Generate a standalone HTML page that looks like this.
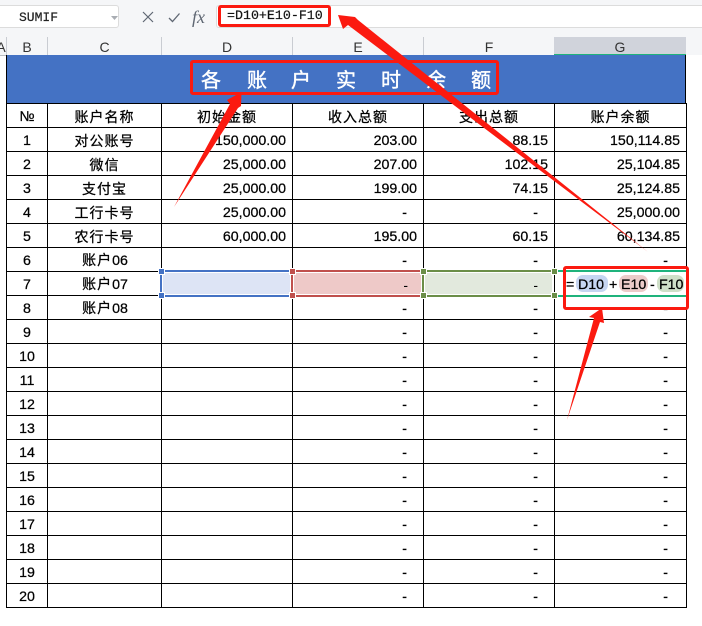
<!DOCTYPE html>
<html><head><meta charset="utf-8">
<style>
html,body{margin:0;padding:0;background:#fff}
body{width:702px;height:626px;position:relative;overflow:hidden;font-family:"Liberation Sans","Noto Sans CJK SC",sans-serif;color:#000}
.abs{position:absolute}
#tb{left:0;top:0;width:702px;height:55px;background:#f5f6f8}
#fb{left:216px;top:5px;width:486px;height:23px;background:#fff;border-top:1px solid #dcdcdc;border-bottom:1px solid #dcdcdc;box-sizing:border-box;border-left:1px solid #dcdcdc;border-radius:3px 0 0 3px}
#nb{left:-4px;top:5px;width:123px;height:23px;background:#fff;border:1px solid #dcdcdc;border-radius:3px;box-sizing:border-box}
.mono{font-family:"Liberation Mono",monospace;position:absolute;white-space:pre;-webkit-text-stroke:.2px}
.hd{position:absolute;top:37px;height:18px;line-height:20px;font-size:14px;color:#333;text-align:center}
.sep{position:absolute;top:37px;height:18px;width:1px;background:#c9ccd2}
#title{left:6px;top:55px;width:680px;height:48px;background:#4472c4;box-sizing:border-box;border-left:1px solid #000;border-right:1px solid #000}
.tc{position:absolute;top:70px;width:22px;text-align:center;color:#fff;font-size:20px;line-height:22px;font-weight:normal;-webkit-text-stroke:.4px #fff}
table{position:absolute;left:6px;top:103px;width:680px;border-collapse:collapse;table-layout:fixed;font-size:14.2px;-webkit-text-stroke:.25px #000}
td{border:1px solid #000;padding:2px 0 0;box-sizing:border-box;height:24px;line-height:20px;overflow:hidden;white-space:nowrap}
td.c{text-align:center}
td.z{text-align:center;font-size:14px;letter-spacing:1px}
td.n{text-align:center;font-size:14.2px;padding-left:1px}
td.n span{font-size:14px;letter-spacing:1px}
td.r{text-align:right;padding-right:6px}
td.d{text-align:right;padding-right:16px}
td.g{text-align:right;padding-right:18px}
.ln{position:absolute;height:2px}
.vl{position:absolute;width:2px;top:270px;height:27px}
.hnd{position:absolute;width:5px;height:5px;border:1px solid #fff}
.chip{position:absolute;top:275px;height:17px;border-radius:7px}
.ft{position:absolute;top:275px;line-height:20px;font-size:14.2px;white-space:pre;-webkit-text-stroke:.25px #000}
.rb{position:absolute;border:3px solid #fb1a10;border-radius:3px;box-sizing:border-box}
</style></head><body>
<div class="abs" id="tb"></div>
<div class="abs" id="nb"></div>
<div class="mono" style="left:19px;top:9px;font-size:13px;line-height:17px;color:#222">SUMIF</div>
<svg class="abs" style="left:0;top:0" width="216" height="30">
<path d="M111 16h7l-3.500 4z" fill="#a9adb3"/>
<path d="M143 12l10 10M153 12l-10 10" stroke="#5f6773" stroke-width="1.200" fill="none"/>
<path d="M169 18l3.500 3.500 7-8" stroke="#5f6773" stroke-width="1.300" fill="none"/>
<text x="192" y="23" font-family="Liberation Serif,serif" font-style="italic" font-size="18" fill="#5f6773">fx</text>
</svg>
<div class="abs" id="fb"></div>
<div class="mono" style="left:227px;top:7px;font-size:13.3px;line-height:18px;color:#111">=D10+E10-F10</div>

<div class="abs" style="left:554px;top:37px;width:132px;height:18px;background:#d0d3db"></div>
<div class="abs" style="left:554px;top:54px;width:132px;height:1.500px;background:#1fb37c"></div>
<div class="hd" style="left:0;width:6px;overflow:hidden;text-indent:-4px">A</div>
<div class="hd" style="left:7px;width:40px">B</div>
<div class="hd" style="left:48px;width:113px">C</div>
<div class="hd" style="left:162px;width:130px">D</div>
<div class="hd" style="left:293px;width:130px">E</div>
<div class="hd" style="left:424px;width:130px">F</div>
<div class="hd" style="left:555px;width:130px">G</div>
<div class="sep" style="left:6px"></div><div class="sep" style="left:47px"></div><div class="sep" style="left:161px"></div><div class="sep" style="left:292px"></div><div class="sep" style="left:423px"></div>
<div class="abs" style="left:0;top:55px;width:554px;height:1px;background:#bbbec4"></div>

<div class="abs" id="title"></div>
<div class="tc" style="left:200px">各</div><div class="tc" style="left:246px">账</div><div class="tc" style="left:290px">户</div><div class="tc" style="left:335px">实</div><div class="tc" style="left:380px">时</div><div class="tc" style="left:425px">余</div><div class="tc" style="left:470px">额</div>

<table>
<colgroup><col style="width:41px"><col style="width:114px"><col style="width:131px"><col style="width:131px"><col style="width:131px"><col style="width:132px"></colgroup>
<tr><td class="c">№</td><td class="z">账户名称</td><td class="z">初始金额</td><td class="z">收入总额</td><td class="z">支出总额</td><td class="z">账户余额</td></tr>
<tr><td class="c">1</td><td class="z">对公账号</td><td class="r">150,000.00</td><td class="r">203.00</td><td class="r">88.15</td><td class="r">150,114.85</td></tr>
<tr><td class="c">2</td><td class="z">微信</td><td class="r">25,000.00</td><td class="r">207.00</td><td class="r">102.15</td><td class="r">25,104.85</td></tr>
<tr><td class="c">3</td><td class="z">支付宝</td><td class="r">25,000.00</td><td class="r">199.00</td><td class="r">74.15</td><td class="r">25,124.85</td></tr>
<tr><td class="c">4</td><td class="z">工行卡号</td><td class="r">25,000.00</td><td class="d">-</td><td class="d">-</td><td class="r">25,000.00</td></tr>
<tr><td class="c">5</td><td class="z">农行卡号</td><td class="r">60,000.00</td><td class="r">195.00</td><td class="r">60.15</td><td class="r">60,134.85</td></tr>
<tr><td class="c">6</td><td class="n"><span>账户</span>06</td><td></td><td class="d">-</td><td class="d">-</td><td class="g">-</td></tr>
<tr><td class="c">7</td><td class="n"><span>账户</span>07</td><td></td><td class="d">-</td><td class="d">-</td><td></td></tr>
<tr><td class="c">8</td><td class="n"><span>账户</span>08</td><td></td><td class="d">-</td><td class="d">-</td><td class="g">-</td></tr>
<tr><td class="c">9</td><td></td><td></td><td class="d">-</td><td class="d">-</td><td class="g">-</td></tr>
<tr><td class="c">10</td><td></td><td></td><td class="d">-</td><td class="d">-</td><td class="g">-</td></tr>
<tr><td class="c">11</td><td></td><td></td><td class="d">-</td><td class="d">-</td><td class="g">-</td></tr>
<tr><td class="c">12</td><td></td><td></td><td class="d">-</td><td class="d">-</td><td class="g">-</td></tr>
<tr><td class="c">13</td><td></td><td></td><td class="d">-</td><td class="d">-</td><td class="g">-</td></tr>
<tr><td class="c">14</td><td></td><td></td><td class="d">-</td><td class="d">-</td><td class="g">-</td></tr>
<tr><td class="c">15</td><td></td><td></td><td class="d">-</td><td class="d">-</td><td class="g">-</td></tr>
<tr><td class="c">16</td><td></td><td></td><td class="d">-</td><td class="d">-</td><td class="g">-</td></tr>
<tr><td class="c">17</td><td></td><td></td><td class="d">-</td><td class="d">-</td><td class="g">-</td></tr>
<tr><td class="c">18</td><td></td><td></td><td class="d">-</td><td class="d">-</td><td class="g">-</td></tr>
<tr><td class="c">19</td><td></td><td></td><td class="d">-</td><td class="d">-</td><td class="g">-</td></tr>
<tr><td class="c">20</td><td></td><td></td><td class="d">-</td><td class="d">-</td><td class="g">-</td></tr>
</table>

<div class="abs" style="left:163px;top:273px;width:127px;height:21px;background:#dde4f5"></div>
<div class="abs" style="left:294px;top:273px;width:127px;height:21px;background:#eec9c8"></div>
<div class="abs" style="left:425px;top:273px;width:127px;height:21px;background:#e2e9dd"></div>
<div class="abs" style="left:393px;top:274px;line-height:22px;font-size:14px;width:15px;text-align:right">-</div>
<div class="abs" style="left:523px;top:274px;line-height:22px;font-size:14px;width:15px;text-align:right">-</div>
<div class="ln" style="left:160px;top:270px;width:132px;background:#4472c4"></div>
<div class="ln" style="left:160px;top:295px;width:132px;background:#4472c4"></div>
<div class="vl" style="left:160px;background:#4472c4"></div>
<div class="ln" style="left:292px;top:270px;width:131px;background:#c0504d"></div>
<div class="ln" style="left:292px;top:295px;width:131px;background:#c0504d"></div>
<div class="vl" style="left:291px;background:#c0504d"></div>
<div class="ln" style="left:423px;top:270px;width:132px;background:#6b8e48"></div>
<div class="ln" style="left:423px;top:295px;width:132px;background:#6b8e48"></div>
<div class="vl" style="left:422px;background:#6b8e48"></div>
<div class="ln" style="left:556px;top:270px;width:130px;background:#1fb37c"></div>
<div class="ln" style="left:556px;top:295px;width:130px;background:#1fb37c"></div>
<div class="hnd" style="left:158px;top:268px;background:#4472c4"></div>
<div class="hnd" style="left:158px;top:292px;background:#4472c4"></div>
<div class="hnd" style="left:289px;top:268px;background:#c0504d"></div>
<div class="hnd" style="left:289px;top:292px;background:#c0504d"></div>
<div class="hnd" style="left:420px;top:268px;background:#6b8e48"></div>
<div class="hnd" style="left:420px;top:292px;background:#6b8e48"></div>
<div class="hnd" style="left:551px;top:268px;background:#6b8e48"></div>
<div class="hnd" style="left:551px;top:292px;background:#6b8e48"></div>
<div class="chip" style="left:576px;width:32px;background:#c6d5f1"></div>
<div class="chip" style="left:619px;width:29px;background:#eccbc9"></div>
<div class="chip" style="left:657px;width:27px;background:#cfdfc8"></div>
<div class="ft" style="left:566px">=</div>
<div class="ft" style="left:578px">D10</div>
<div class="ft" style="left:609px">+</div>
<div class="ft" style="left:621px">E10</div>
<div class="ft" style="left:650px">-</div>
<div class="ft" style="left:659px">F10</div>

<div class="rb" style="left:218px;top:5px;width:113px;height:22px"></div>
<div class="rb" style="left:190px;top:60px;width:309px;height:35px"></div>
<div class="rb" style="left:563px;top:266px;width:126px;height:44px"></div>

<svg class="abs" style="left:0;top:0" width="702" height="626">
<g fill="#fb1a10">
<polygon points="174,207 230,104 227,100 241.500,92 241,106 238,108"/>
<polygon points="338,15 355,17 358,20 648,252 348,25 343,29"/>
<polygon points="567,420 594,318 589,317 602,308 604,323 600,322"/>
</g>
</svg>
</body></html>
